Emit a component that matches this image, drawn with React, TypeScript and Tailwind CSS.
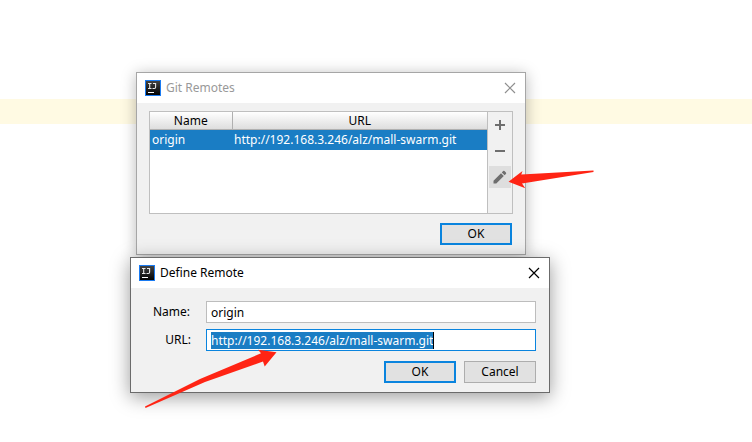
import type { ReactNode } from 'react';

const remotes = [{ name: 'origin', url: 'http://192.168.3.246/alz/mall-swarm.git' }];

function AppLogo() {
  return (
    <svg width="16" height="16" viewBox="0 0 16 16" aria-hidden="true">
      <defs>
        <linearGradient id="logo" x1="0" y1="0" x2="0" y2="1">
          <stop offset="0" stopColor="#444" />
          <stop offset="1" stopColor="#000" />
        </linearGradient>
      </defs>
      <rect x="0.5" y="0.5" width="15" height="15" fill="url(#logo)" stroke="#1a7bf2" />
      <path
        d="M3 3.500h3.500M4.700 3.500v5M3 8.500h3.500M8 3.500h2.600v3.800q0 1.200-1.200 1.200H7.500"
        fill="none"
        stroke="#e8e8e8"
        strokeWidth="1.1"
      />
      <path d="M3 12.500h6" stroke="#fff" />
    </svg>
  );
}

interface DialogProps {
  title: string;
  active?: boolean;
  className: string;
  children: ReactNode;
}

function Dialog({ title, active, className, children }: DialogProps) {
  return (
    <section
      aria-label={title}
      className={`absolute border bg-[#f1f1f1] ${
        active
          ? 'border-[#6b6b6b] shadow-[0_4px_18px_rgba(0,0,0,0.4)]'
          : 'border-[#a6a6a6] shadow-[0_2px_14px_rgba(0,0,0,0.28)]'
      } ${className}`}
    >
      <header className="flex h-[30px] items-center bg-white pr-[9px] pl-2">
        <AppLogo />
        <h2 className={`ml-[5px] flex-1 ${active ? 'text-black' : 'text-[#999]'}`}>{title}</h2>
        <button type="button" aria-label="Close" className={active ? 'text-black' : 'text-[#8f8f8f]'}>
          <svg width="12" height="12" viewBox="0 0 12 12" stroke="currentColor" strokeWidth="1.2">
            <path d="M1 1l10 10M11 1L1 11" />
          </svg>
        </button>
      </header>
      {children}
    </section>
  );
}

function Button({ children, primary }: { children: ReactNode; primary?: boolean }) {
  return (
    <button
      type="button"
      className={`flex h-[22px] w-[72px] items-center justify-center bg-[#e1e1e1] ${
        primary ? 'border-2 border-[#0a84de]' : 'border border-[#adadad]'
      }`}
    >
      {children}
    </button>
  );
}

function Arrows() {
  return (
    <svg className="pointer-events-none absolute top-0 left-0" width="752" height="442" fill="#ff2414" aria-hidden="true">
      <path d="M508.500 181.700L522.500 171L521.300 174.500L593.500 170.500V172L522 183.500L525.300 188.300Z" />
      <path d="M276.500 352.300L258 349.700L261 353.300L200 379L145 406.500L145.500 408L205 382L263 361.500L264.700 366.500Z" />
    </svg>
  );
}

export default function App() {
  return (
    <main className="relative min-h-screen overflow-hidden bg-white pt-[99px] font-['Noto_Sans',sans-serif] text-[12px] leading-4 text-black">
      <div className="h-[25px] bg-[#fffae3]" />

      <Dialog title="Git Remotes" className="top-[72px] left-[136px] w-[390px]">
        <div className="px-3 pt-2 pb-[9px]">
          <div className="flex h-[103px] border border-[#bfbfbf]">
            <div className="flex-1 bg-white">
              <table className="w-full table-fixed border-collapse">
                <thead>
                  <tr className="h-[17px] bg-linear-to-b from-white to-[#dcdcdc]">
                    <th className="w-[82px] border-r border-b border-[#b0b0b0] p-0 pt-px font-normal">Name</th>
                    <th className="border-b border-[#b0b0b0] p-0 pt-px font-normal">URL</th>
                  </tr>
                </thead>
                <tbody>
                  {remotes.map((remote) => (
                    <tr key={remote.name} className="h-5 bg-[#1a7dc4] text-white">
                      <td className="p-0 pl-[2px]">{remote.name}</td>
                      <td className="p-0 pl-[2px]">{remote.url}</td>
                    </tr>
                  ))}
                </tbody>
              </table>
            </div>
            <div className="flex w-[25px] flex-col items-center gap-1 border-l border-[#bfbfbf] pt-[2px] text-[#6e6e6e]">
              <button type="button" aria-label="Add" className="flex size-[22px] items-center justify-center">
                <svg width="10" height="10" viewBox="0 0 10 10" fill="currentColor">
                  <path d="M4 0h2v4h4v2H6v4H4V6H0V4h4z" />
                </svg>
              </button>
              <button type="button" aria-label="Remove" className="flex size-[22px] items-center justify-center">
                <svg width="10" height="10" viewBox="0 0 10 10" fill="currentColor">
                  <path d="M0 4h10v2H0z" />
                </svg>
              </button>
              <button type="button" aria-label="Edit" className="flex size-[22px] items-center justify-center bg-[#dedede]">
                <svg width="14" height="14" viewBox="0 0 14 14" fill="currentColor">
                  <path d="M0.500 13.500v-2.800L8 3.200l2.800 2.800-7.500 7.500zM8.800 2.400l1.300-1.300q0.700-0.700 1.400 0l1.400 1.400q0.700 0.700 0 1.400l-1.300 1.300z" />
                </svg>
              </button>
            </div>
          </div>
          <div className="mt-[9px] flex justify-end pr-px">
            <Button primary>OK</Button>
          </div>
        </div>
      </Dialog>

      <Dialog title="Define Remote" active className="top-[257px] left-[130px] w-[420px]">
        <form className="px-[13px] pt-[13px] pb-[9px]">
          <div className="grid grid-cols-[62px_1fr] items-center gap-y-[6px]">
            <label htmlFor="name" className="pl-[9px]">
              Name:
            </label>
            <input id="name" defaultValue="origin" className="h-[22px] border border-[#bdbdbd] bg-white px-1 outline-none" />
            <label htmlFor="url" className="pr-[15px] text-right">
              URL:
            </label>
            <div className="flex h-[22px] items-center border border-[#0a84de] bg-white pl-1">
              <input
                id="url"
                defaultValue={remotes[0].url}
                className="field-sizing-content h-[17px] border-r border-black bg-[#1a7dc4] text-white outline-none"
              />
            </div>
          </div>
          <div className="mt-[10px] flex justify-end gap-2">
            <Button primary>OK</Button>
            <Button>Cancel</Button>
          </div>
        </form>
      </Dialog>

      <Arrows />
    </main>
  );
}
